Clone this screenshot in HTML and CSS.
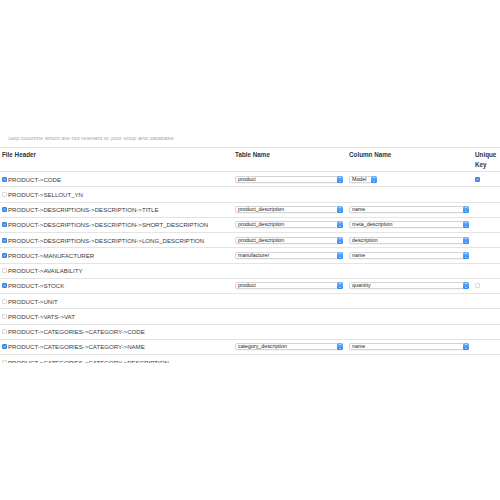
FILE: index.html
```html
<!DOCTYPE html>
<html lang="en">
<head>
    <meta charset="UTF-8">
    <meta name="viewport" content="width=device-width, initial-scale=1.0">
    <title>Import mapping</title>
    <link rel="stylesheet" href="styles.css">
</head>
<body>
    <div class="shot">
        <div class="note">Skip columns which are not relevant to your shop and database</div>

        <!-- mapping table -->
        <div class="mapping">
            <div class="row head">
                <div class="cell first">File Header</div>
                <div class="cell">Table Name</div>
                <div class="cell">Column Name</div>
                <div class="cell">Unique Key</div>
            </div>

            <div class="row">
                <div class="cell first"><span class="check on"></span>PRODUCT-&gt;CODE</div>
                <div class="cell"><div class="select table"><span>product</span><i class="arrow"></i></div></div>
                <div class="cell"><div class="select short"><span>Model</span><i class="arrow"></i></div></div>
                <div class="cell"><span class="check on"></span></div>
            </div>

            <div class="row">
                <div class="cell first"><span class="check"></span>PRODUCT-&gt;SELLOUT_YN</div>
            </div>

            <div class="row">
                <div class="cell first"><span class="check on"></span>PRODUCT-&gt;DESCRIPTIONS-&gt;DESCRIPTION-&gt;TITLE</div>
                <div class="cell"><div class="select table"><span>product_description</span><i class="arrow"></i></div></div>
                <div class="cell"><div class="select column"><span>name</span><i class="arrow"></i></div></div>
            </div>

            <div class="row">
                <div class="cell first"><span class="check on"></span>PRODUCT-&gt;DESCRIPTIONS-&gt;DESCRIPTION-&gt;SHORT_DESCRIPTION</div>
                <div class="cell"><div class="select table"><span>product_description</span><i class="arrow"></i></div></div>
                <div class="cell"><div class="select column"><span>meta_description</span><i class="arrow"></i></div></div>
            </div>

            <div class="row">
                <div class="cell first"><span class="check on"></span>PRODUCT-&gt;DESCRIPTIONS-&gt;DESCRIPTION-&gt;LONG_DESCRIPTION</div>
                <div class="cell"><div class="select table"><span>product_description</span><i class="arrow"></i></div></div>
                <div class="cell"><div class="select column"><span>description</span><i class="arrow"></i></div></div>
            </div>

            <div class="row">
                <div class="cell first"><span class="check on"></span>PRODUCT-&gt;MANUFACTURER</div>
                <div class="cell"><div class="select table"><span>manufacturer</span><i class="arrow"></i></div></div>
                <div class="cell"><div class="select column"><span>name</span><i class="arrow"></i></div></div>
            </div>

            <div class="row">
                <div class="cell first"><span class="check"></span>PRODUCT-&gt;AVAILABILITY</div>
            </div>

            <div class="row">
                <div class="cell first"><span class="check on"></span>PRODUCT-&gt;STOCK</div>
                <div class="cell"><div class="select table"><span>product</span><i class="arrow"></i></div></div>
                <div class="cell"><div class="select column"><span>quantity</span><i class="arrow"></i></div></div>
                <div class="cell"><span class="check"></span></div>
            </div>

            <div class="row">
                <div class="cell first"><span class="check"></span>PRODUCT-&gt;UNIT</div>
            </div>

            <div class="row">
                <div class="cell first"><span class="check"></span>PRODUCT-&gt;VATS-&gt;VAT</div>
            </div>

            <div class="row">
                <div class="cell first"><span class="check"></span>PRODUCT-&gt;CATEGORIES-&gt;CATEGORY-&gt;CODE</div>
            </div>

            <div class="row">
                <div class="cell first"><span class="check on"></span>PRODUCT-&gt;CATEGORIES-&gt;CATEGORY-&gt;NAME</div>
                <div class="cell"><div class="select table"><span>category_description</span><i class="arrow"></i></div></div>
                <div class="cell"><div class="select column"><span>name</span><i class="arrow"></i></div></div>
            </div>

            <div class="row">
                <div class="cell first"><span class="check"></span>PRODUCT-&gt;CATEGORIES-&gt;CATEGORY-&gt;DESCRIPTION</div>
            </div>
        </div>
    </div>
</body>
</html>
```

FILE: styles.css
```css
body {
    margin: 0;
    background: white;
    font-family: "Liberation Sans", Arial, sans-serif;
    color: #333;
}
.shot {
    margin-top: 137px;
    height: 226px;
    overflow: hidden;
}
.note {
    margin-top: -3px;
    margin-bottom: 5px;
    padding-left: 8px;
    font-size: 5.9px;
    line-height: 8px;
    color: #aaa;
    white-space: nowrap;
}
.row {
    display: grid;
    grid-template-columns: 232px 115px 126px 1fr;
    align-items: center;
    box-sizing: border-box;
    height: 15.25px;
    border-top: 1px solid #e4e4e4;
    font-size: 6.1px;
    color: #3a3a3a;
    white-space: nowrap;
}
.row.head {
    height: 24px;
    align-items: start;
    padding-top: 2px;
    font-weight: bold;
    font-size: 6.3px;
    line-height: 10px;
    color: #333;
    white-space: normal;
}
.cell {
    padding-left: 2px;
    display: flex;
    align-items: center;
}
.row .cell:nth-child(2) {
    padding-left: 3px;
}
.head .cell {
    display: block;
}
.head .cell:nth-child(4) {
    padding-right: 4px;
}
.check {
    display: inline-block;
    box-sizing: border-box;
    width: 5px;
    height: 5px;
    margin-right: 1px;
    border: 1px solid #d8d8d8;
    border-radius: 1px;
    background: white;
}
.check.on {
    border-color: #3584e2;
    background: #4a95ec url("data:image/svg+xml;utf8,<svg xmlns='http://www.w3.org/2000/svg' viewBox='0 0 5 5'><path d='M1 2.6 L2 3.6 L4 1.2' fill='none' stroke='white' stroke-width='0.9'/></svg>") center / 100% no-repeat;
}
.select {
    display: flex;
    align-items: center;
    box-sizing: border-box;
    height: 7px;
    border: 1px solid #d4d4d4;
    border-radius: 2px;
    background: white;
    box-shadow: 0 0.5px 0.5px rgba(0, 0, 0, 0.08);
    font-size: 5.3px;
    color: #222;
}
.select span {
    flex: 1;
    padding-left: 2px;
    line-height: 5px;
}
.select.table {
    width: 108px;
}
.select.column {
    width: 120px;
}
.select.short {
    width: 28px;
}
.arrow {
    width: 6px;
    height: 7px;
    margin: -1px -1px -1px 0;
    border-radius: 1.5px;
    background: linear-gradient(#72b5fb, #2a87f5);
    position: relative;
}
.arrow::before,
.arrow::after {
    content: "";
    position: absolute;
    left: 1.5px;
    width: 0;
    height: 0;
    border-left: 1.5px solid transparent;
    border-right: 1.5px solid transparent;
}
.arrow::before {
    top: 1px;
    border-bottom: 1.5px solid white;
}
.arrow::after {
    bottom: 1px;
    border-top: 1.5px solid white;
}
```
